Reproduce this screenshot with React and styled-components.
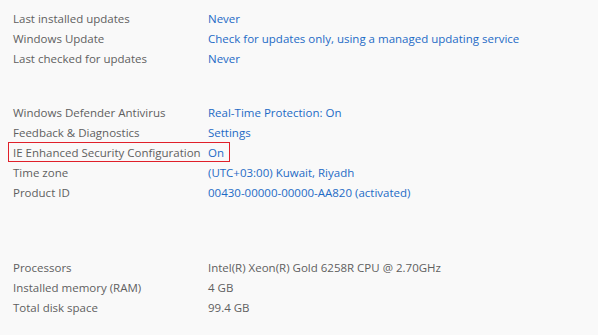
import React from 'react';
import styled, { createGlobalStyle } from 'styled-components';

const GlobalStyle = createGlobalStyle`
  html, body {
    margin: 0;
    padding: 0;
    background: #f9f9f9;
  }
  body {
    font-family: 'Open Sans', 'Noto Sans', sans-serif;
    font-size: 11.5px;
  }
`;

const groups = [
  {
    gap: 0,
    rows: [
      { label: 'Last installed updates', value: 'Never', link: true },
      { label: 'Windows Update', value: 'Check for updates only, using a managed updating service', link: true },
      { label: 'Last checked for updates', value: 'Never', link: true },
    ],
  },
  {
    gap: 34,
    rows: [
      { label: 'Windows Defender Antivirus', value: 'Real-Time Protection: On', link: true },
      { label: 'Feedback & Diagnostics', value: 'Settings', link: true },
      { label: 'IE Enhanced Security Configuration', value: 'On', link: true, marked: true },
      { label: 'Time zone', value: '(UTC+03:00) Kuwait, Riyadh', link: true },
      { label: 'Product ID', value: '00430-00000-00000-AA820 (activated)', link: true },
    ],
  },
  {
    gap: 55,
    rows: [
      { label: 'Processors', value: 'Intel(R) Xeon(R) Gold 6258R CPU @ 2.70GHz' },
      { label: 'Installed memory (RAM)', value: '4 GB' },
      { label: 'Total disk space', value: '99.4 GB' },
    ],
  },
];

const App = () => (
  <>
    <GlobalStyle />
    <Panel>
      {groups.map((group, i) => (
        <Group key={i} gap={group.gap}>
          {group.rows.map((row) => (
            <Row key={row.label} marked={row.marked}>
              <Label>{row.label}</Label>
              <Value link={row.link}>{row.value}</Value>
            </Row>
          ))}
        </Group>
      ))}
    </Panel>
  </>
);

export default App;

const Panel = styled.div`
  width: 598px;
  height: 335px;
  box-sizing: border-box;
  padding: 8px 0 0 13px;
  overflow: hidden;
`;

const Group = styled.div`
  display: flex;
  flex-direction: column;
  margin-top: ${(props) => props.gap}px;
`;

const Row = styled.div`
  display: grid;
  grid-template-columns: 195px auto;
  align-items: center;
  height: 20px;
  white-space: nowrap;
  width: fit-content;
  ${(props) =>
    props.marked &&
    `
    margin-left: -5px;
    padding: 0 6px 0 5px;
    outline: 1px solid #e0202a;
    outline-offset: -1px;
  `}
`;

const Label = styled.span`
  color: #5f5f5f;
`;

const Value = styled.span`
  color: ${(props) => (props.link ? '#1e6bc6' : '#5f5f5f')};
`;
